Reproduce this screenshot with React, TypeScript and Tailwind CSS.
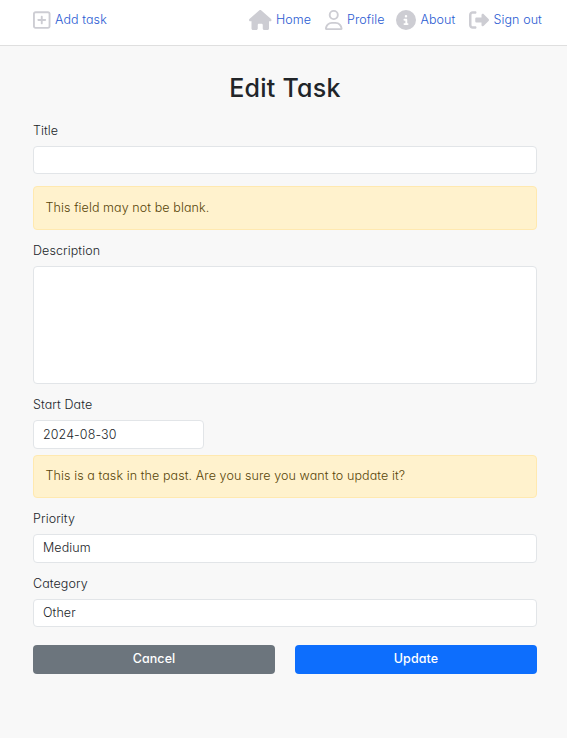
import type { ReactNode } from "react";
import { FaRegSquarePlus, FaHouse, FaRegUser, FaCircleInfo, FaRightFromBracket } from "react-icons/fa6";

function NavLink({ icon, children, className }: { icon: ReactNode; children: ReactNode; className: string }) {
  return (
    <a href="#" className={`flex items-center text-[#cdcdd3] ${className}`}>
      {icon}
      <span className="ml-[4.5px] whitespace-nowrap text-[#2a5bd2]">{children}</span>
    </a>
  );
}

function Label({ children, className }: { children: ReactNode; className: string }) {
  return <label className={`block h-5 leading-5 text-[#212529] ${className}`}>{children}</label>;
}

function Alert({ children, className }: { children: ReactNode; className: string }) {
  return (
    <div className={`flex items-center rounded border border-[#ffe9b0] bg-[#fff2cd] px-[11.5px] text-[#574408] ${className}`}>
      {children}
    </div>
  );
}

const field = "flex items-center rounded border border-[#e2e5e8] bg-white px-[9px] text-[#212529]";

export default function App() {
  return (
    <div className="h-[738px] w-[567px] bg-[#f8f8f8] font-['Inter','Open_Sans',sans-serif] text-[12.5px] font-light tracking-[0.09px] [font-feature-settings:'cv11','ss03']">
      <header className="flex h-[46px] items-start border-b border-[#dfdfdf] bg-white pr-6 pl-[33px] pt-[10px] leading-5">
        <NavLink className="" icon={<FaRegSquarePlus className="h-5 w-[17.5px]" />}>Add task</NavLink>
        <nav className="ml-auto flex">
          <NavLink className="w-[76px]" icon={<FaHouse className="h-5 w-[22.5px]" />}>Home</NavLink>
          <NavLink className="w-[71px]" icon={<FaRegUser className="h-5 w-[17.5px]" />}>Profile</NavLink>
          <NavLink className="w-[73px]" icon={<FaCircleInfo className="h-5 w-5" />}>About</NavLink>
          <NavLink className="w-[74px]" icon={<FaRightFromBracket className="h-5 w-5" />}>Sign out</NavLink>
        </nav>
      </header>
      <main className="pr-[30px] pl-[33px] pt-[26px]">
        <h1 className="h-8 text-center text-[25px] leading-8 font-medium tracking-[0.25px] text-[#212529]">Edit Task</h1>
        <Label className="mt-[17px]">Title</Label>
        <div className={`${field} mt-[5px] h-[28px]`} />
        <Alert className="mt-3 h-11"><span>This field may not be blank.</span></Alert>
        <Label className="mt-[11px]">Description</Label>
        <div className={`${field} mt-[5px] h-[118px]`} />
        <Label className="mt-[11px]">Start Date</Label>
        <div className={`${field} mt-[5px] h-[29px] w-[171px] pt-px`}><span>2024-08-30</span></div>
        <Alert className="mt-[6px] h-[43px]"><span>This is a task in the past. Are you sure you want to update it?</span></Alert>
        <Label className="mt-[11px]">Priority</Label>
        <div className={`${field} mt-[5px] h-[29px]`}><span>Medium</span></div>
        <Label className="mt-[11px]">Category</Label>
        <div className={`${field} mt-[5px] h-[28px]`}><span>Other</span></div>
        <div className="mt-[18px] flex gap-5 font-medium text-white">
          <button className="h-[29px] w-[242px] rounded bg-[#6c757d]">Cancel</button>
          <button className="h-[29px] w-[242px] rounded bg-[#0d6efd]">Update</button>
        </div>
      </main>
    </div>
  );
}
